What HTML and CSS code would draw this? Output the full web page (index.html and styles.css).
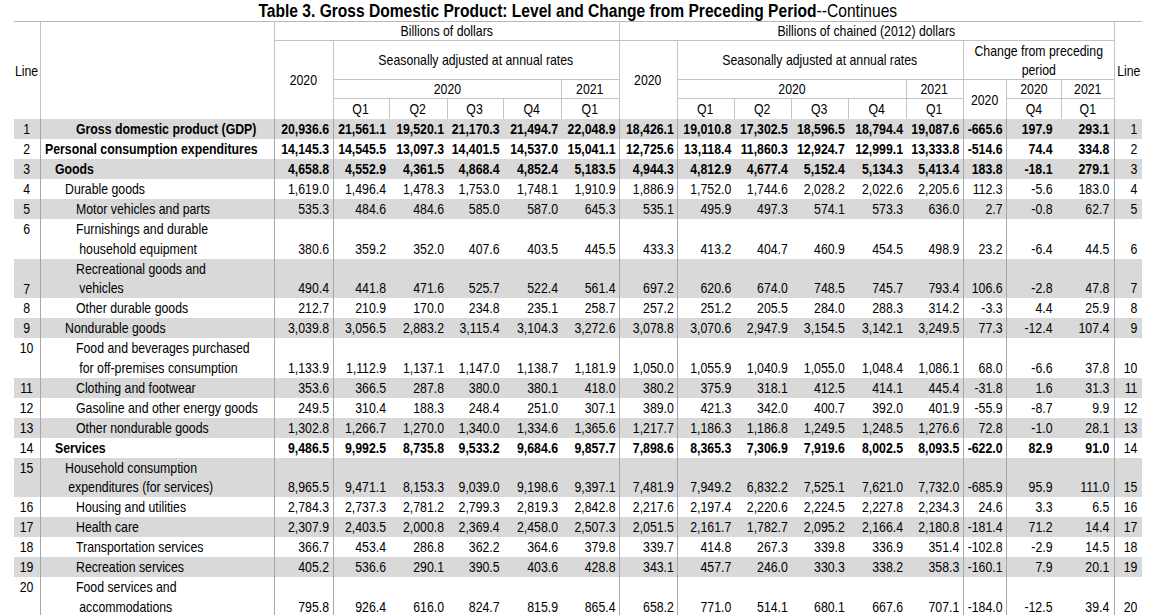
FILE: index.html
```html
<!DOCTYPE html>
<html lang="en">
<head>
<meta charset="utf-8">
<title>Table 3. Gross Domestic Product</title>
<link rel="stylesheet" href="styles.css">
</head>
<body>
<div class="title"><span class="t"><b>Table 3. Gross Domestic Product: Level and Change from Preceding Period</b>--Continues</span></div>
<table class="gdp">
<colgroup>
<col class="c-line"><col class="c-label"><col class="c59"><col class="c56"><col class="c58"><col class="c56"><col class="c58"><col class="c58"><col class="c58"><col class="c57"><col class="c57"><col class="c57"><col class="c58"><col class="c57"><col class="c43"><col class="c55"><col class="c53"><col class="c-rline">
</colgroup>
<thead>
<tr class="hA">
<th rowspan="4" class="top r"><span>Line</span></th>
<th rowspan="4" class="top r"></th>
<th colspan="6" class="top r b"><span>Billions of dollars</span></th>
<th colspan="9" class="top r b"><span>Billions of chained (2012) dollars</span></th>
<th rowspan="4" class="top"><span>Line</span></th>
</tr>
<tr class="hB">
<th rowspan="3" class="r"><span>2020</span></th>
<th colspan="5" class="r b"><span>Seasonally adjusted at annual rates</span></th>
<th rowspan="3" class="r"><span>2020</span></th>
<th colspan="5" class="r b"><span>Seasonally adjusted at annual rates</span></th>
<th colspan="3" class="r b wrap"><span>Change from preceding period</span></th>
</tr>
<tr class="hC">
<th colspan="4" class="r b"><span>2020</span></th>
<th class="r b"><span>2021</span></th>
<th colspan="4" class="r b"><span>2020</span></th>
<th class="r b"><span>2021</span></th>
<th rowspan="2" class="r"><span>2020</span></th>
<th class="r b"><span>2020</span></th>
<th class="r b"><span>2021</span></th>
</tr>
<tr class="hD">
<th class="r"><span>Q1</span></th><th class="r"><span>Q2</span></th><th class="r"><span>Q3</span></th><th class="r"><span>Q4</span></th><th class="r"><span>Q1</span></th>
<th class="r"><span>Q1</span></th><th class="r"><span>Q2</span></th><th class="r"><span>Q3</span></th><th class="r"><span>Q4</span></th><th class="r"><span>Q1</span></th>
<th class="r"><span>Q4</span></th><th class="r"><span>Q1</span></th>
</tr>
</thead>
<tbody>
<tr class="g bold"><td><span>1</span></td><td class="lab i3"><span>Gross domestic product (GDP)</span></td><td><span>20,936.6</span></td><td><span>21,561.1</span></td><td><span>19,520.1</span></td><td><span>21,170.3</span></td><td><span>21,494.7</span></td><td><span>22,048.9</span></td><td><span>18,426.1</span></td><td><span>19,010.8</span></td><td><span>17,302.5</span></td><td><span>18,596.5</span></td><td><span>18,794.4</span></td><td><span>19,087.6</span></td><td><span>-665.6</span></td><td><span>197.9</span></td><td><span>293.1</span></td><td><span>1</span></td></tr>
<tr class="bold"><td><span>2</span></td><td class="lab i0"><span>Personal consumption expenditures</span></td><td><span>14,145.3</span></td><td><span>14,545.5</span></td><td><span>13,097.3</span></td><td><span>14,401.5</span></td><td><span>14,537.0</span></td><td><span>15,041.1</span></td><td><span>12,725.6</span></td><td><span>13,118.4</span></td><td><span>11,860.3</span></td><td><span>12,924.7</span></td><td><span>12,999.1</span></td><td><span>13,333.8</span></td><td><span>-514.6</span></td><td><span>74.4</span></td><td><span>334.8</span></td><td><span>2</span></td></tr>
<tr class="g bold"><td><span>3</span></td><td class="lab i1"><span>Goods</span></td><td><span>4,658.8</span></td><td><span>4,552.9</span></td><td><span>4,361.5</span></td><td><span>4,868.4</span></td><td><span>4,852.4</span></td><td><span>5,183.5</span></td><td><span>4,944.3</span></td><td><span>4,812.9</span></td><td><span>4,677.4</span></td><td><span>5,152.4</span></td><td><span>5,134.3</span></td><td><span>5,413.4</span></td><td><span>183.8</span></td><td><span>-18.1</span></td><td><span>279.1</span></td><td><span>3</span></td></tr>
<tr><td><span>4</span></td><td class="lab i2"><span>Durable goods</span></td><td><span>1,619.0</span></td><td><span>1,496.4</span></td><td><span>1,478.3</span></td><td><span>1,753.0</span></td><td><span>1,748.1</span></td><td><span>1,910.9</span></td><td><span>1,886.9</span></td><td><span>1,752.0</span></td><td><span>1,744.6</span></td><td><span>2,028.2</span></td><td><span>2,022.6</span></td><td><span>2,205.6</span></td><td><span>112.3</span></td><td><span>-5.6</span></td><td><span>183.0</span></td><td><span>4</span></td></tr>
<tr class="g"><td><span>5</span></td><td class="lab i3"><span>Motor vehicles and parts</span></td><td><span>535.3</span></td><td><span>484.6</span></td><td><span>484.6</span></td><td><span>585.0</span></td><td><span>587.0</span></td><td><span>645.3</span></td><td><span>535.1</span></td><td><span>495.9</span></td><td><span>497.3</span></td><td><span>574.1</span></td><td><span>573.3</span></td><td><span>636.0</span></td><td><span>2.7</span></td><td><span>-0.8</span></td><td><span>62.7</span></td><td><span>5</span></td></tr>
<tr class="two"><td><span>6</span></td><td class="lab i3"><span><span class="ln1">Furnishings and durable</span><span class="ln2">household equipment</span></span></td><td><span>380.6</span></td><td><span>359.2</span></td><td><span>352.0</span></td><td><span>407.6</span></td><td><span>403.5</span></td><td><span>445.5</span></td><td><span>433.3</span></td><td><span>413.2</span></td><td><span>404.7</span></td><td><span>460.9</span></td><td><span>454.5</span></td><td><span>498.9</span></td><td><span>23.2</span></td><td><span>-6.4</span></td><td><span>44.5</span></td><td><span>6</span></td></tr>
<tr class="g two low"><td><span>7</span></td><td class="lab i3"><span><span class="ln1">Recreational goods and</span><span class="ln2">vehicles</span></span></td><td><span>490.4</span></td><td><span>441.8</span></td><td><span>471.6</span></td><td><span>525.7</span></td><td><span>522.4</span></td><td><span>561.4</span></td><td><span>697.2</span></td><td><span>620.6</span></td><td><span>674.0</span></td><td><span>748.5</span></td><td><span>745.7</span></td><td><span>793.4</span></td><td><span>106.6</span></td><td><span>-2.8</span></td><td><span>47.8</span></td><td><span>7</span></td></tr>
<tr><td><span>8</span></td><td class="lab i3"><span>Other durable goods</span></td><td><span>212.7</span></td><td><span>210.9</span></td><td><span>170.0</span></td><td><span>234.8</span></td><td><span>235.1</span></td><td><span>258.7</span></td><td><span>257.2</span></td><td><span>251.2</span></td><td><span>205.5</span></td><td><span>284.0</span></td><td><span>288.3</span></td><td><span>314.2</span></td><td><span>-3.3</span></td><td><span>4.4</span></td><td><span>25.9</span></td><td><span>8</span></td></tr>
<tr class="g"><td><span>9</span></td><td class="lab i2"><span>Nondurable goods</span></td><td><span>3,039.8</span></td><td><span>3,056.5</span></td><td><span>2,883.2</span></td><td><span>3,115.4</span></td><td><span>3,104.3</span></td><td><span>3,272.6</span></td><td><span>3,078.8</span></td><td><span>3,070.6</span></td><td><span>2,947.9</span></td><td><span>3,154.5</span></td><td><span>3,142.1</span></td><td><span>3,249.5</span></td><td><span>77.3</span></td><td><span>-12.4</span></td><td><span>107.4</span></td><td><span>9</span></td></tr>
<tr class="two"><td><span>10</span></td><td class="lab i3"><span><span class="ln1">Food and beverages purchased</span><span class="ln2">for off-premises consumption</span></span></td><td><span>1,133.9</span></td><td><span>1,112.9</span></td><td><span>1,137.1</span></td><td><span>1,147.0</span></td><td><span>1,138.7</span></td><td><span>1,181.9</span></td><td><span>1,050.0</span></td><td><span>1,055.9</span></td><td><span>1,040.9</span></td><td><span>1,055.0</span></td><td><span>1,048.4</span></td><td><span>1,086.1</span></td><td><span>68.0</span></td><td><span>-6.6</span></td><td><span>37.8</span></td><td><span>10</span></td></tr>
<tr class="g"><td><span>11</span></td><td class="lab i3"><span>Clothing and footwear</span></td><td><span>353.6</span></td><td><span>366.5</span></td><td><span>287.8</span></td><td><span>380.0</span></td><td><span>380.1</span></td><td><span>418.0</span></td><td><span>380.2</span></td><td><span>375.9</span></td><td><span>318.1</span></td><td><span>412.5</span></td><td><span>414.1</span></td><td><span>445.4</span></td><td><span>-31.8</span></td><td><span>1.6</span></td><td><span>31.3</span></td><td><span>11</span></td></tr>
<tr><td><span>12</span></td><td class="lab i3"><span>Gasoline and other energy goods</span></td><td><span>249.5</span></td><td><span>310.4</span></td><td><span>188.3</span></td><td><span>248.4</span></td><td><span>251.0</span></td><td><span>307.1</span></td><td><span>389.0</span></td><td><span>421.3</span></td><td><span>342.0</span></td><td><span>400.7</span></td><td><span>392.0</span></td><td><span>401.9</span></td><td><span>-55.9</span></td><td><span>-8.7</span></td><td><span>9.9</span></td><td><span>12</span></td></tr>
<tr class="g"><td><span>13</span></td><td class="lab i3"><span>Other nondurable goods</span></td><td><span>1,302.8</span></td><td><span>1,266.7</span></td><td><span>1,270.0</span></td><td><span>1,340.0</span></td><td><span>1,334.6</span></td><td><span>1,365.6</span></td><td><span>1,217.7</span></td><td><span>1,186.3</span></td><td><span>1,186.8</span></td><td><span>1,249.5</span></td><td><span>1,248.5</span></td><td><span>1,276.6</span></td><td><span>72.8</span></td><td><span>-1.0</span></td><td><span>28.1</span></td><td><span>13</span></td></tr>
<tr class="bold"><td><span>14</span></td><td class="lab i1"><span>Services</span></td><td><span>9,486.5</span></td><td><span>9,992.5</span></td><td><span>8,735.8</span></td><td><span>9,533.2</span></td><td><span>9,684.6</span></td><td><span>9,857.7</span></td><td><span>7,898.6</span></td><td><span>8,365.3</span></td><td><span>7,306.9</span></td><td><span>7,919.6</span></td><td><span>8,002.5</span></td><td><span>8,093.5</span></td><td><span>-622.0</span></td><td><span>82.9</span></td><td><span>91.0</span></td><td><span>14</span></td></tr>
<tr class="g two"><td><span>15</span></td><td class="lab i2"><span><span class="ln1">Household consumption</span><span class="ln2">expenditures (for services)</span></span></td><td><span>8,965.5</span></td><td><span>9,471.1</span></td><td><span>8,153.3</span></td><td><span>9,039.0</span></td><td><span>9,198.6</span></td><td><span>9,397.1</span></td><td><span>7,481.9</span></td><td><span>7,949.2</span></td><td><span>6,832.2</span></td><td><span>7,525.1</span></td><td><span>7,621.0</span></td><td><span>7,732.0</span></td><td><span>-685.9</span></td><td><span>95.9</span></td><td><span>111.0</span></td><td><span>15</span></td></tr>
<tr><td><span>16</span></td><td class="lab i3"><span>Housing and utilities</span></td><td><span>2,784.3</span></td><td><span>2,737.3</span></td><td><span>2,781.2</span></td><td><span>2,799.3</span></td><td><span>2,819.3</span></td><td><span>2,842.8</span></td><td><span>2,217.6</span></td><td><span>2,197.4</span></td><td><span>2,220.6</span></td><td><span>2,224.5</span></td><td><span>2,227.8</span></td><td><span>2,234.3</span></td><td><span>24.6</span></td><td><span>3.3</span></td><td><span>6.5</span></td><td><span>16</span></td></tr>
<tr class="g"><td><span>17</span></td><td class="lab i3"><span>Health care</span></td><td><span>2,307.9</span></td><td><span>2,403.5</span></td><td><span>2,000.8</span></td><td><span>2,369.4</span></td><td><span>2,458.0</span></td><td><span>2,507.3</span></td><td><span>2,051.5</span></td><td><span>2,161.7</span></td><td><span>1,782.7</span></td><td><span>2,095.2</span></td><td><span>2,166.4</span></td><td><span>2,180.8</span></td><td><span>-181.4</span></td><td><span>71.2</span></td><td><span>14.4</span></td><td><span>17</span></td></tr>
<tr><td><span>18</span></td><td class="lab i3"><span>Transportation services</span></td><td><span>366.7</span></td><td><span>453.4</span></td><td><span>286.8</span></td><td><span>362.2</span></td><td><span>364.6</span></td><td><span>379.8</span></td><td><span>339.7</span></td><td><span>414.8</span></td><td><span>267.3</span></td><td><span>339.8</span></td><td><span>336.9</span></td><td><span>351.4</span></td><td><span>-102.8</span></td><td><span>-2.9</span></td><td><span>14.5</span></td><td><span>18</span></td></tr>
<tr class="g"><td><span>19</span></td><td class="lab i3"><span>Recreation services</span></td><td><span>405.2</span></td><td><span>536.6</span></td><td><span>290.1</span></td><td><span>390.5</span></td><td><span>403.6</span></td><td><span>428.8</span></td><td><span>343.1</span></td><td><span>457.7</span></td><td><span>246.0</span></td><td><span>330.3</span></td><td><span>338.2</span></td><td><span>358.3</span></td><td><span>-160.1</span></td><td><span>7.9</span></td><td><span>20.1</span></td><td><span>19</span></td></tr>
<tr class="two"><td><span>20</span></td><td class="lab i3"><span><span class="ln1">Food services and</span><span class="ln2">accommodations</span></span></td><td><span>795.8</span></td><td><span>926.4</span></td><td><span>616.0</span></td><td><span>824.7</span></td><td><span>815.9</span></td><td><span>865.4</span></td><td><span>658.2</span></td><td><span>771.0</span></td><td><span>514.1</span></td><td><span>680.1</span></td><td><span>667.6</span></td><td><span>707.1</span></td><td><span>-184.0</span></td><td><span>-12.5</span></td><td><span>39.4</span></td><td><span>20</span></td></tr>
</tbody>
</table>
</body>
</html>
```
FILE: styles.css
```css
/* Arial Narrow is not available: Liberation Sans (Arial metrics) is
   condensed horizontally to 82% inside each cell to emulate it. */
html, body {
  margin: 0;
  padding: 0;
  background: #ffffff;
}

body {
  font-family: "Liberation Sans", Arial, sans-serif;
  color: #000000;
}

.title {
  width: 1128px;
  margin-left: 14px;
  height: 21px;
  line-height: 21px;
  font-size: 19px;
  white-space: nowrap;
}

.title .t {
  display: block;
  width: 121.95%;
  margin-left: -10.975%;
  text-align: center;
  transform: scaleX(0.82);
  transform-origin: 50% 50%;
}

.title b {
  font-weight: bold;
}

.gdp {
  margin-left: 14px;
  width: 1128px;
  table-layout: fixed;
  border-collapse: collapse;
  font-size: 15px;
}

.c-line { width: 26px; }
.c-label { width: 234px; }
.c59 { width: 59px; }
.c58 { width: 58px; }
.c57 { width: 57px; }
.c56 { width: 56px; }
.c55 { width: 55px; }
.c53 { width: 53px; }
.c43 { width: 43px; }
.c-rline { width: 28px; }

/* condensed text wrappers */
.gdp th > span,
.gdp td > span {
  display: block;
  width: 121.95%;
  white-space: nowrap;
  transform: scaleX(0.82);
}

.gdp th {
  font-weight: normal;
  padding: 0;
  text-align: center;
  vertical-align: middle;
  line-height: 18px;
}

.gdp th > span {
  margin-left: -10.975%;
  transform-origin: 50% 50%;
}

.gdp th.wrap {
  padding: 0 8px;
}

.gdp th.wrap > span {
  white-space: normal;
  line-height: 19px;
}

.gdp th.top { border-top: 1px solid #b8b8b8; }
.gdp th.r { border-right: 1px solid #c4c4c4; }
.gdp th.b { border-bottom: 1px solid #c4c4c4; }

.hA th { height: 18px; }
.hB th { height: 36px; }
.hC th { height: 18px; }
.hD th { height: 20px; }

.gdp td {
  padding: 0 3px 0 0;
  line-height: 20px;
  height: 20px;
  text-align: right;
  vertical-align: bottom;
}

.gdp td > span {
  margin-left: -21.95%;
  transform-origin: 100% 50%;
}

.gdp tr.g td { background: #d9d9d9; }
.gdp tr.bold td { font-weight: bold; }

.gdp td:nth-child(1) {
  text-align: center;
  padding: 0;
  vertical-align: top;
}

.gdp td:nth-child(1) > span {
  margin-left: -10.975%;
  transform-origin: 50% 50%;
}

.gdp tr.low td:nth-child(1) { vertical-align: bottom; }

.gdp td:nth-child(16) { padding-right: 9px; }
.gdp td:nth-child(17) { padding-right: 4px; }

.gdp td:last-child {
  padding-right: 5px;
}

.gdp tr.bold td:first-child,
.gdp tr.bold td:last-child {
  font-weight: normal;
}

.gdp td:nth-child(1),
.gdp td:nth-child(2),
.gdp td:nth-child(3),
.gdp td:nth-child(8),
.gdp td:nth-child(9),
.gdp td:nth-child(14),
.gdp td:nth-child(15),
.gdp td:nth-child(17) {
  border-right: 1px solid #a6a6a6;
}

.gdp td.lab {
  text-align: left;
  vertical-align: top;
}

.gdp td.lab > span {
  margin-left: 0;
  margin-right: -21.95%;
  transform-origin: 0 50%;
}

.gdp td.i0 { padding-left: 4px; }
.gdp td.i1 { padding-left: 14px; }
.gdp td.i2 { padding-left: 24px; }
.gdp td.i3 { padding-left: 35px; }

.gdp tr.two td { height: 39.5px; }
.gdp tr.two td.lab { line-height: 19.5px; }
.gdp tr.two td:first-child { line-height: 19.5px; }

.ln1, .ln2 { display: block; }
.ln2 { padding-left: 4px; }
```
